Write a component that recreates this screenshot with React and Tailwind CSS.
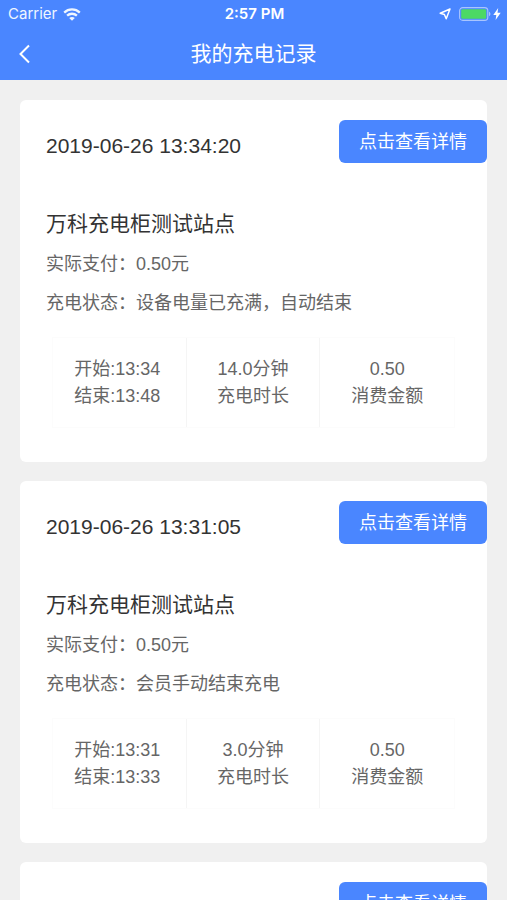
import React, { useState } from "react";

const initialRecords = [
  {
    id: 1,
    createdAt: "2019-06-26 13:34:20",
    station: "万科充电柜测试站点",
    paid: "0.50",
    status: "设备电量已充满，自动结束",
    start: "13:34",
    end: "13:48",
    minutes: "14.0",
  },
  {
    id: 2,
    createdAt: "2019-06-26 13:31:05",
    station: "万科充电柜测试站点",
    paid: "0.50",
    status: "会员手动结束充电",
    start: "13:31",
    end: "13:33",
    minutes: "3.0",
  },
  {
    id: 3,
    createdAt: "2019-06-26 13:25:42",
    station: "万科充电柜测试站点",
    paid: "0.50",
    status: "会员手动结束充电",
    start: "13:25",
    end: "13:30",
    minutes: "5.0",
  },
];

const WifiIcon = () => (
  <svg width="18" height="13" viewBox="0 0 18 13" fill="none" stroke="currentColor" strokeWidth="2.3">
    <path d="M1.2 4.6C5.6.4 12.4.4 16.8 4.6" />
    <path d="M4.1 7.7c2.8-2.6 7-2.6 9.8 0" />
    <path d="M9 12.8 6.2 10c1.6-1.4 4-1.4 5.6 0Z" fill="currentColor" stroke="none" />
  </svg>
);

const LocationIcon = () => (
  <svg width="12" height="12" viewBox="0 0 12 12" fill="none" stroke="currentColor" strokeWidth="1.5" strokeLinejoin="round">
    <path d="M11 1 1.2 5.3l4.2 1.2 1.8 4.3Z" />
  </svg>
);

const BatteryIcon = () => (
  <svg width="32" height="14" viewBox="0 0 32 14" fill="none">
    <rect x="0.6" y="0.6" width="28.2" height="12.8" rx="3.2" stroke="#a9c5ff" strokeWidth="1.1" />
    <rect x="2.2" y="2.2" width="25" height="9.6" rx="1.4" fill="#4cd964" />
    <path d="M30 4.8c1.9.7 1.9 3.7 0 4.4Z" fill="#a9c5ff" />
  </svg>
);

const BoltIcon = () => (
  <svg width="8" height="12" viewBox="0 0 8 12" fill="currentColor">
    <path d="M5.2 0 .3 6.9h3L2.6 12l5.1-7.2H4.5Z" />
  </svg>
);

const StatusBar = () => (
  <div className="grid grid-cols-3 items-center h-7 pl-2 pr-1.5">
    <div className="flex items-center gap-1.5 text-[15px] text-blue-50">
      <span>Carrier</span>
      <WifiIcon />
    </div>
    <div className="text-center text-[15px] font-semibold">2:57 PM</div>
    <div className="flex items-center justify-end gap-2">
      <LocationIcon />
      <span className="flex items-center gap-0.5">
        <BatteryIcon />
        <BoltIcon />
      </span>
    </div>
  </div>
);

const RecordCard = ({ record }) => (
  <article className="shrink-0 bg-white rounded-md pt-5 pb-[34px]">
    <div className="flex items-start justify-between">
      <time className="pl-[26px] text-[21px] leading-[52px] text-[#333333]">{record.createdAt}</time>
      <button
        type="button"
        className="h-[43px] px-5 rounded-md bg-[#4a86ff] text-lg text-white whitespace-nowrap"
      >
        点击查看详情
      </button>
    </div>

    <div className="mt-[30px] px-[26px] text-lg leading-[39px] text-[#666666]">
      <h2 className="text-[21px] leading-[43px] text-[#333333]">{record.station}</h2>
      <p>实际支付：{record.paid}元</p>
      <p>充电状态：{record.status}</p>
    </div>

    <div className="grid grid-cols-3 mt-3.5 mx-8 h-[91px] border border-[#fcfcfc] divide-x divide-[#f5f5f5] text-center text-lg leading-[27px] text-[#666666]">
      <div className="flex flex-col justify-center pr-1">
        <p>开始:{record.start}</p>
        <p>结束:{record.end}</p>
      </div>
      <div className="flex flex-col justify-center">
        <p>{record.minutes}分钟</p>
        <p>充电时长</p>
      </div>
      <div className="flex flex-col justify-center">
        <p>{record.paid}</p>
        <p>消费金额</p>
      </div>
    </div>
  </article>
);

const App = () => {
  const [records] = useState(initialRecords);

  return (
    <div className="h-screen flex flex-col bg-[#f0f0f0] font-['Inter','Noto_Sans_CJK_SC',sans-serif]">
      <header className="shrink-0 bg-[#4a86ff] text-white">
        <StatusBar />
        <div className="grid grid-cols-[52px_1fr_52px] items-center h-[52px]">
          <button type="button" aria-label="返回" className="flex items-center h-full pl-[18px]">
            <svg width="13" height="20" viewBox="0 0 13 20" fill="none" stroke="currentColor" strokeWidth="2">
              <path d="M11 1.5 2.5 10l8.5 8.5" />
            </svg>
          </button>
          <h1 className="text-center text-[21px]">我的充电记录</h1>
        </div>
      </header>

      <main className="flex-1 min-h-0 overflow-y-auto [scrollbar-width:none] flex flex-col gap-[19px] p-5 font-['Liberation_Sans','Noto_Sans_CJK_SC',sans-serif]">
        {records.map((record) => (
          <RecordCard key={record.id} record={record} />
        ))}
      </main>
    </div>
  );
};

export default App;
